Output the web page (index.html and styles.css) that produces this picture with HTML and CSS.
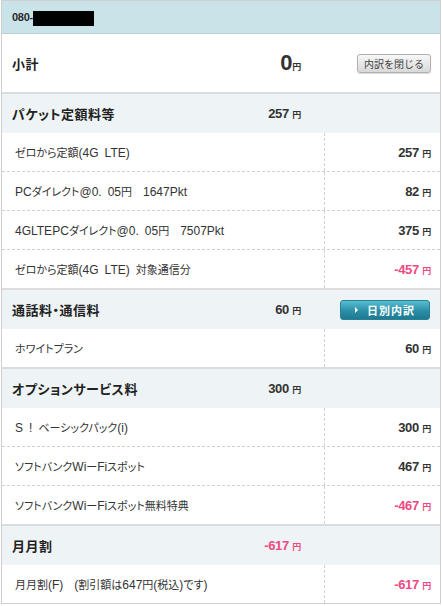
FILE: index.html
```html
<!DOCTYPE html>
<html lang="ja">
<head>
<meta charset="utf-8">
<link rel="stylesheet" href="styles.css">
</head>
<body>
<div class="bill">
  <div class="head"><span class="tel">080-</span><span class="mask"></span></div>

  <div class="row subtotal">
    <div class="main"><span class="title">小計</span><span class="amt big">0<small>円</small></span></div>
    <div class="side"><span class="btn-gray">内訳を閉じる</span></div>
  </div>

  <div class="row sec-head">
    <div class="main"><span class="title">パケット定額料等</span><span class="amt">257 <small>円</small></span></div>
    <div class="side"></div>
  </div>
  <div class="row item">
    <div class="main"><span class="label"><span class="j">ゼロから定額</span>(4G&#8194;LTE)</span></div>
    <div class="side"><span class="amt">257 <small>円</small></span></div>
  </div>
  <div class="row item">
    <div class="main"><span class="label">PC<span class="j">ダイレクト</span>@0.&#8194;05<span class="j">円</span><span class="w">　</span>1647Pkt</span></div>
    <div class="side"><span class="amt">82 <small>円</small></span></div>
  </div>
  <div class="row item">
    <div class="main"><span class="label">4GLTEPC<span class="j">ダイレクト</span>@0.&#8194;05<span class="j">円</span><span class="w">　</span>7507Pkt</span></div>
    <div class="side"><span class="amt">375 <small>円</small></span></div>
  </div>
  <div class="row item">
    <div class="main"><span class="label"><span class="j">ゼロから定額</span>(4G&#8194;LTE)&#8194;<span class="j">対象通信分</span></span></div>
    <div class="side"><span class="amt neg">-457 <small>円</small></span></div>
  </div>

  <div class="row sec-head">
    <div class="main"><span class="title">通話料・通信料</span><span class="amt">60 <small>円</small></span></div>
    <div class="side"><span class="btn-blue"><span class="tri"></span>日別内訳</span></div>
  </div>
  <div class="row item">
    <div class="main"><span class="label"><span class="j">ホワイトプラン</span></span></div>
    <div class="side"><span class="amt">60 <small>円</small></span></div>
  </div>

  <div class="row sec-head">
    <div class="main"><span class="title">オプションサービス料</span><span class="amt">300 <small>円</small></span></div>
    <div class="side"></div>
  </div>
  <div class="row item">
    <div class="main"><span class="label">S&#8194;!&#8194;<span class="j">ベーシックパック</span>(i)</span></div>
    <div class="side"><span class="amt">300 <small>円</small></span></div>
  </div>
  <div class="row item">
    <div class="main"><span class="label"><span class="j">ソフトバンク</span>Wi<span class="j">ー</span>Fi<span class="j">スポット</span></span></div>
    <div class="side"><span class="amt">467 <small>円</small></span></div>
  </div>
  <div class="row item">
    <div class="main"><span class="label"><span class="j">ソフトバンク</span>Wi<span class="j">ー</span>Fi<span class="j">スポット無料特典</span></span></div>
    <div class="side"><span class="amt neg">-467 <small>円</small></span></div>
  </div>

  <div class="row sec-head">
    <div class="main"><span class="title">月月割</span><span class="amt neg">-617 <small>円</small></span></div>
    <div class="side"></div>
  </div>
  <div class="row item">
    <div class="main"><span class="label"><span class="j">月月割</span>(F)<span class="w">　</span>(<span class="j">割引額は</span>647<span class="j">円</span>(<span class="j">税込</span>)<span class="j">です</span>)</span></div>
    <div class="side"><span class="amt neg">-617 <small>円</small></span></div>
  </div>
</div>
</body>
</html>
```

FILE: styles.css
```css
* { box-sizing: content-box; }
body {
  margin: 0;
  background: #fff;
  color: #333;
  font-family: "Liberation Sans", "Noto Sans CJK JP", sans-serif;
}
.bill {
  margin-left: 1px;
  width: 438px;
  border: 1px solid #cfcfcf;
}
.head {
  height: 32px;
  background: #c9e3e8;
  border-bottom: 1px solid #b8d2d7;
  display: flex;
  align-items: center;
  padding-left: 10px;
}
.tel {
  font-size: 11px;
  font-weight: bold;
  color: #2a2a2a;
  letter-spacing: -0.3px;
}
.mask {
  display: inline-block;
  width: 61px;
  height: 15px;
  background: #000;
  margin-top: 2px;
}
.row {
  display: grid;
  grid-template-columns: 322px 1fr;
}
.main {
  display: flex;
  align-items: center;
  justify-content: space-between;
  padding: 0 23px 0 10px;
}
.side {
  display: flex;
  align-items: center;
  justify-content: flex-end;
  padding-right: 9px;
}
.subtotal {
  height: 58px;
}
.sec-head {
  height: 39px;
  background: #eef4f5;
  border-top: 2px solid #dcdcdc;
}
.item {
  height: 38px;
}
.item + .item {
  border-top: 1px dashed #d2d2d2;
}
.item .main {
  padding-left: 13px;
}
.item .side {
  border-left: 1px dashed #d2d2d2;
}
.title {
  font-size: 13px;
  font-weight: bold;
  color: #222;
  letter-spacing: 0.5px;
  font-feature-settings: "palt";
}
.label {
  font-size: 12px;
  color: #333;
  font-feature-settings: "palt";
}
.j {
  font-size: 11px;
}
.w {
  font-size: 11px;
  font-feature-settings: normal;
}
.amt {
  font-size: 13px;
  font-weight: bold;
  color: #333;
  letter-spacing: -0.3px;
}
.amt small {
  font-size: 9px;
  font-weight: bold;
}
.amt.big {
  font-size: 22px;
}
.amt.big small {
  font-size: 9px;
}
.neg {
  color: #ee4a82;
}
.btn-gray {
  display: flex;
  align-items: center;
  justify-content: center;
  width: 72px;
  height: 17px;
  border: 1px solid #b0b0b0;
  border-radius: 3px;
  background: linear-gradient(#f7f7f7, #d9d9d9);
  box-shadow: 0 1px 1px rgba(0,0,0,0.15);
  font-size: 10px;
  color: #444;
  margin-top: 1px;
}
.btn-blue {
  display: flex;
  align-items: center;
  justify-content: center;
  width: 88px;
  height: 18px;
  border: 1px solid #2a8197;
  border-radius: 3px;
  background: linear-gradient(#58bfd3, #2a8ea6 55%, #1e7a91);
  font-size: 11px;
  font-weight: bold;
  color: #fff;
  letter-spacing: 1px;
  margin-right: 1px;
}
.tri {
  width: 0;
  height: 0;
  border-left: 3px solid #fff;
  border-top: 3px solid transparent;
  border-bottom: 3px solid transparent;
  margin-right: 9px;
}
```
